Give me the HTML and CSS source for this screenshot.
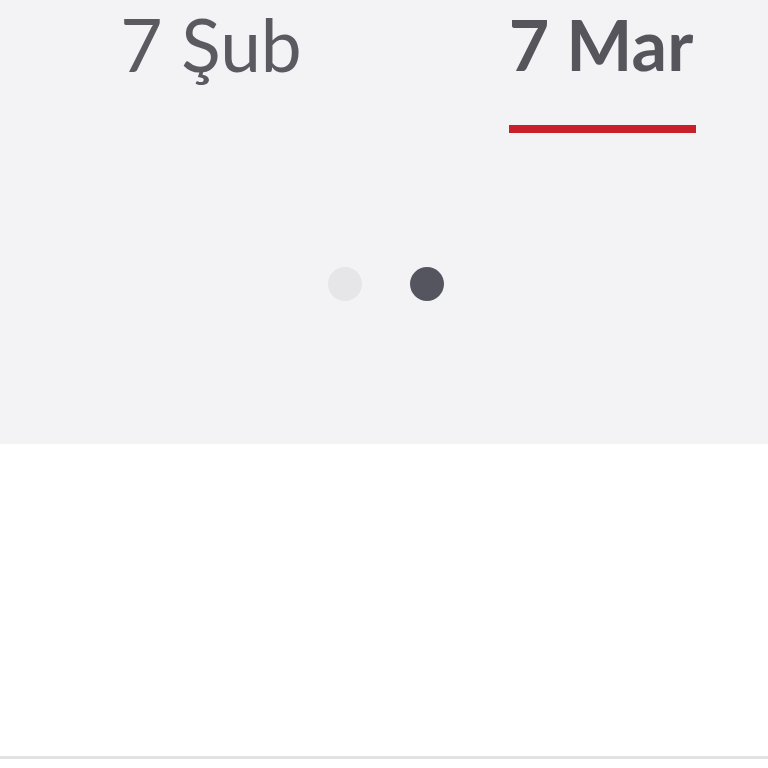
FILE: index.html
```html
<!DOCTYPE html>
<html lang="tr">
<head>
<meta charset="utf-8">
<title>Tarih sekmeleri</title>
<link rel="stylesheet" href="styles.css">
</head>
<body>
<div class="page">
  <section class="top">
    <nav class="tabs">
      <div class="tab"><span class="tab-inner"><span class="tab-label">7 Şub</span><span class="tab-bar"></span></span></div>
      <div class="tab active"><span class="tab-inner"><span class="tab-label">7 Mar</span><span class="tab-bar"></span></span></div>
    </nav>
    <div class="dots">
      <span class="dot"></span>
      <span class="dot on"></span>
    </div>
  </section>
  <section class="bottom"></section>
  <div class="rule"></div>
</div>
</body>
</html>
```
FILE: styles.css
```css
html, body {
  margin: 0;
  padding: 0;
  background: #ffffff;
}
.page {
  width: 768px;
  height: 768px;
  overflow: hidden;
  display: flex;
  flex-direction: column;
}
.top {
  height: 444px;
  background: #f3f3f5;
  display: flex;
  flex-direction: column;
}
.tabs {
  display: grid;
  grid-template-columns: 390px 390px;
  margin-left: 16px;
  padding-top: 8px;
}
.tab {
  display: flex;
  justify-content: center;
}
.tab-inner {
  display: inline-flex;
  flex-direction: column;
  align-items: stretch;
}
.tab-label {
  font-family: Lato, "Noto Sans", sans-serif;
  font-size: 73px;
  line-height: 1;
  font-weight: 400;
  color: #5a5a60;
  white-space: nowrap;
}
.active .tab-label {
  font-size: 70px;
  line-height: 73px;
  font-weight: 700;
  color: #55555b;
}
.tab-bar {
  height: 8px;
  margin-top: 44px;
  margin-right: -3px;
  background: transparent;
}
.active .tab-bar {
  background: #c8202a;
}
.dots {
  display: flex;
  justify-content: center;
  gap: 48px;
  margin-top: 134px;
  margin-left: 4px;
}
.dot {
  width: 34px;
  height: 34px;
  border-radius: 50%;
  background: #e6e6e9;
}
.dot.on {
  background: #55555f;
}
.bottom {
  height: 312px;
  background: #ffffff;
}
.rule {
  height: 3px;
  background: #e2e2e4;
}
```
